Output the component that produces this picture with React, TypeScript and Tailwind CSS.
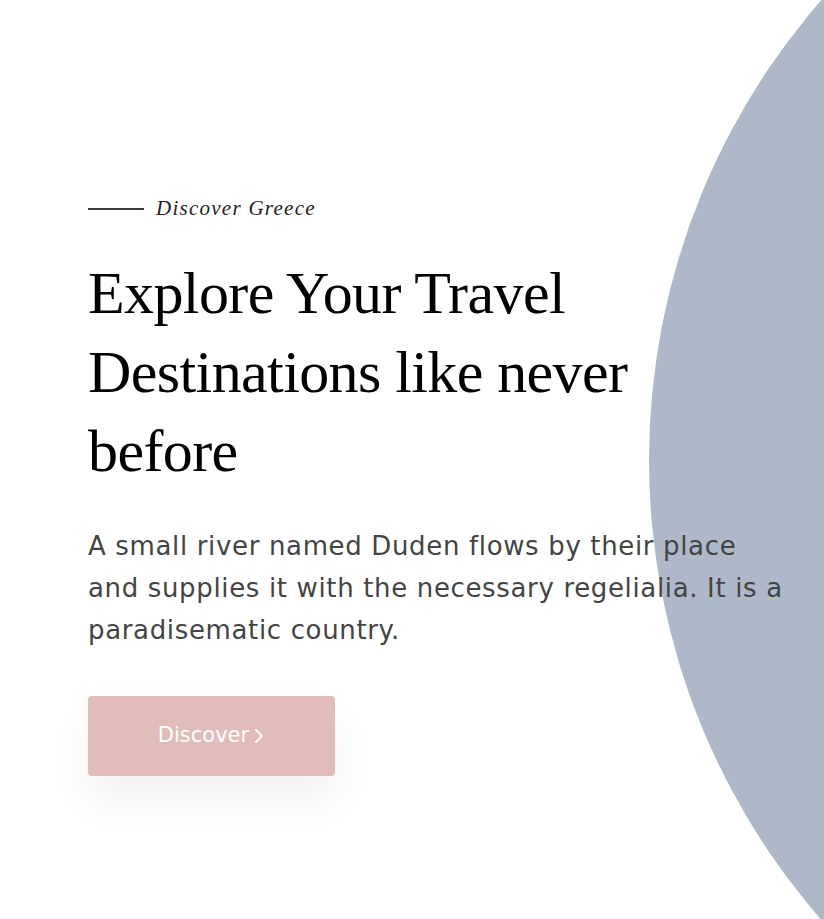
import React from "react";

export default function App() {
  return (
    <div className="relative h-[919px] w-full overflow-hidden bg-white">
      {/* big blue shape on the right */}
      <div className="absolute left-[649px] top-[-240px] h-[1400px] w-[1400px] rounded-full bg-[#aeb8c9]" />

      <section className="relative z-10 flex flex-col items-start pl-[88px] pt-[193px]">
        <div className="flex items-center gap-3">
          <span className="block h-[2px] w-[56px] bg-[#3a3a3a]" />
          <span className="font-['Liberation_Serif',serif] text-[21px] italic tracking-[0.06em] text-[#222]">
            Discover Greece
          </span>
        </div>

        <h1 className="mt-[29px] w-[610px] font-['Liberation_Serif',serif] text-[60px] leading-[79px] tracking-[-0.01em] text-black">
          Explore Your Travel Destinations like never before
        </h1>

        <p className="mt-[34px] w-[704px] font-['DejaVu_Sans',sans-serif] text-[26px] leading-[42px] tracking-[0.025em] text-[#444]">
          A small river named Duden flows by their place and supplies it with the necessary regelialia. It is a
          paradisematic country.
        </p>

        <button className="mt-[45px] flex h-[80px] w-[247px] items-center justify-center gap-1 rounded-[4px] bg-[#e0bdb8] font-['DejaVu_Sans',sans-serif] text-[21px] text-white shadow-[0_24px_40px_rgba(0,0,0,0.06)]">
          Discover
          <svg width="12" height="16" viewBox="0 0 12 16" fill="none" stroke="white" strokeWidth="2" strokeLinecap="round" strokeLinejoin="round">
            <path d="M3 2 L9 8 L3 14" />
          </svg>
        </button>
      </section>
    </div>
  );
}
